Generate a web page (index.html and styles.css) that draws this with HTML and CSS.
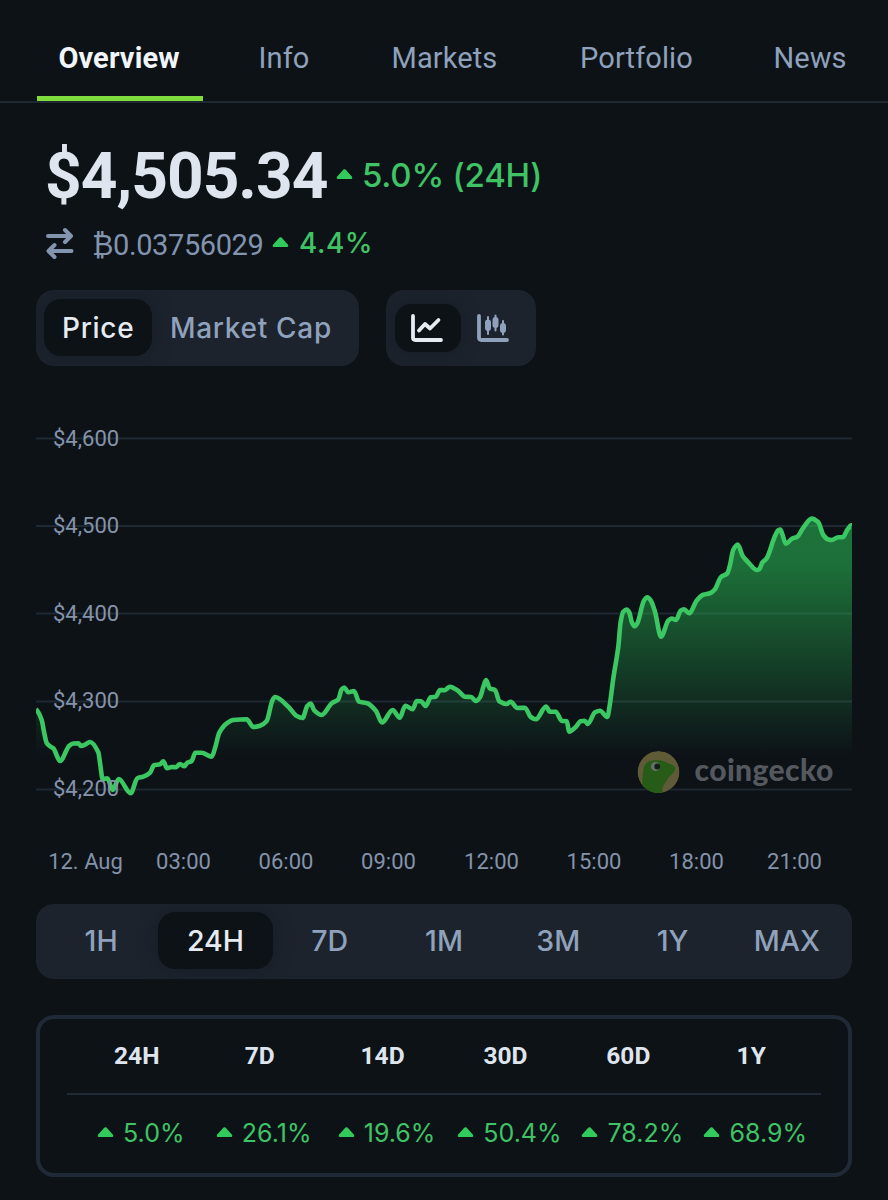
FILE: index.html
```html
<!DOCTYPE html>
<html lang="en">
<head>
    <meta charset="UTF-8">
    <meta name="viewport" content="width=device-width, initial-scale=1.0">
    <title>Price Overview</title>
    <link rel="stylesheet" href="styles.css">
</head>
<body>

<svg class="defs" width="0" height="0">
    <symbol id="caret" viewBox="0 0 16 10">
        <path d="M7 .6a1.500 1.500 0 0 1 2 0l6.300 6.900C16.200 8.600 15.700 10 14.400 10H1.600C.3 10-.2 8.600.7 7.500z" fill="currentColor"/>
    </symbol>
</svg>

<nav class="tabs">
    <a class="tab active">Overview</a>
    <a class="tab">Info</a>
    <a class="tab">Markets</a>
    <a class="tab">Portfolio</a>
    <a class="tab">News</a>
</nav>

<main class="container">
    <div class="price-row">
        <span class="price">$4,505.34</span>
        <svg class="caret"><use href="#caret"/></svg>
        <span class="change">5.0% (24H)</span>
    </div>
    <div class="btc-row">
        <svg class="swap" width="28" height="32" viewBox="0 0 28 32" fill="none" stroke="currentColor" stroke-width="4" stroke-linecap="round" stroke-linejoin="round">
            <path d="M2 9h23M19 3l6 6-6 6M25.500 24H3M8.500 18l-6 6 6 6"/>
        </svg>
        <span class="btc">₿0.03756029</span>
        <svg class="caret"><use href="#caret"/></svg>
        <span class="btc-change">4.4%</span>
    </div>

    <div class="toggles">
        <div class="toggle">
            <button class="toggle-btn price-btn active">Price</button>
            <button class="toggle-btn">Market Cap</button>
        </div>
        <div class="toggle icons">
            <button class="icon-btn active">
                <svg width="32" height="28" viewBox="0 0 32 28" fill="none" stroke="currentColor" stroke-width="3.800" stroke-linecap="round" stroke-linejoin="round">
                    <path d="M2 2v21.500q0 2.500 2.500 2.500H30M8 16.500l6-6.500 5 4.500 8.500-8.500"/>
                </svg>
            </button>
            <button class="icon-btn">
                <svg width="32" height="28" viewBox="0 0 32 28" fill="none" stroke="currentColor" stroke-width="3.800" stroke-linecap="round" stroke-linejoin="round">
                    <path d="M2 2v21.500q0 2.500 2.500 2.500H30"/>
                    <path d="M11 3v17M18.500 1.500v15M26 7v13.500" stroke-width="2"/>
                    <path d="M11 8.500v5.500M18.500 6v5M26 12v4" stroke-width="6"/>
                </svg>
            </button>
        </div>
    </div>

    <svg class="chart" width="816" height="468" viewBox="36 420 816 468">
        <defs>
            <linearGradient id="fill" gradientUnits="userSpaceOnUse" x1="0" y1="518" x2="0" y2="756">
                <stop offset="0" stop-color="#2ac256" stop-opacity=".55"/>
                <stop offset=".2" stop-color="#2ac256" stop-opacity=".53"/>
                <stop offset="1" stop-color="#2ac256" stop-opacity="0"/>
            </linearGradient>
            <clipPath id="logo-clip"><circle cx="658.500" cy="772" r="21"/></clipPath>
        </defs>
        <path class="grid" d="M36 438.500H852M36 526H852M36 613.500H852M36 701.500H852M36 789.500H852"/>
        <path id="area" fill="url(#fill)"/>
        <path id="line" class="line"/>
        <g class="axis">
            <text x="53" y="445.500">$4,600</text>
            <text x="53" y="532.500">$4,500</text>
            <text x="53" y="620.500">$4,400</text>
            <text x="53" y="708">$4,300</text>
            <text x="53" y="795.500">$4,200</text>
        </g>
        <g class="axis times">
            <text x="85.500" y="868.500">12. Aug</text>
            <text x="183.500" y="868.500">03:00</text>
            <text x="286" y="868.500">06:00</text>
            <text x="388.500" y="868.500">09:00</text>
            <text x="491.500" y="868.500">12:00</text>
            <text x="594" y="868.500">15:00</text>
            <text x="696.500" y="868.500">18:00</text>
            <text x="794.500" y="868.500">21:00</text>
        </g>
        <g clip-path="url(#logo-clip)">
            <circle cx="658.500" cy="772" r="21" fill="#5f5b37"/>
            <path d="M642 796C642 784 642.500 775 643.500 769c1-5 4-8 9-8.500 5-.6 9-.5 12 1 2 1.200 4 2 7 3 3.500 1.200 4.500 4 3 6.500-1.500 3-5 4.500-7 8.500-2 4-5 5-5 10l0 8z" fill="#265c17"/>
            <circle cx="655.500" cy="766.500" r="4.500" fill="#667068"/>
            <circle cx="657.300" cy="766.500" r="2.900" fill="#141d18"/>
        </g>
        <text class="brand" x="694.500" y="781">coingecko</text>
    </svg>

    <div class="ranges">
        <button class="range">1H</button>
        <button class="range active">24H</button>
        <button class="range">7D</button>
        <button class="range">1M</button>
        <button class="range">3M</button>
        <button class="range">1Y</button>
        <button class="range">MAX</button>
    </div>

    <div class="stats">
        <div class="stats-head">
            <span>24H</span><span>7D</span><span>14D</span><span>30D</span><span>60D</span><span>1Y</span>
        </div>
        <div class="stats-body">
            <span><svg class="caret"><use href="#caret"/></svg>5.0%</span>
            <span><svg class="caret"><use href="#caret"/></svg>26.1%</span>
            <span><svg class="caret"><use href="#caret"/></svg>19.6%</span>
            <span><svg class="caret"><use href="#caret"/></svg>50.4%</span>
            <span><svg class="caret"><use href="#caret"/></svg>78.2%</span>
            <span><svg class="caret"><use href="#caret"/></svg>68.9%</span>
        </div>
    </div>
</main>

<script>
    const points = [
        [36,709.3],[41.7,720],[44,731.7],[46.7,743],[50,746.3],[53.5,748.5],[60,761],[69.3,745.7],[73.3,743.5],[78.3,743.3],
        [81,746],[85,744.7],[90,742],[98.3,752.3],[100.3,765],[102.7,779.3],[107.3,778.3],[112.7,790],[118.7,779],[130.7,793.3],
        [137.3,778.3],[143.3,776.7],[150,772.7],[154,765.3],[160,764.3],[163.3,761.3],[167,768.3],[171.7,767],[175.7,767.3],[180,764],
        [184.3,766.3],[187.3,762.7],[191.7,761],[195.3,752.7],[201.7,752.7],[211.7,756.7],[215,748.3],[219.3,732.7],[226.7,723.3],[233.3,720],
        [246.7,719.3],[253.3,727],[260,725.7],[266.7,721],[272.3,700.7],[275,697],[288.3,706.7],[296.7,716],[302.5,718],[307.3,706],
        [310.7,703.5],[314.2,710.3],[321.7,715],[331.7,703.3],[338.3,699.3],[341.7,689.3],[344.3,687.5],[348.3,692.3],[354,691],[359,701.7],
        [367.3,703.3],[376,711],[382,722.5],[392.7,710],[399.7,717.7],[405.3,705.7],[412.7,709.3],[416.7,701],[421,701.3],[425.7,706],
        [430.7,697.3],[435.7,696.7],[440,690],[444.3,690.3],[450,686.7],[458.3,691],[465,696.7],[471,697],[476,701],[480,697.3],
        [483.3,687],[486,680],[490,688.7],[495,690],[499.3,701.3],[506.7,704],[510.7,701.7],[517.3,708],[525,707.7],[530.7,717],
        [536,719.3],[546,706.5],[550,711.7],[555.7,711.7],[561.7,720.7],[566.7,721.3],[569.3,731.7],[576,726.7],[580.5,721.3],[584.5,720.7],
        [587.7,724],[595,712.3],[600,710.7],[607.3,717],[610,703.3],[613.3,678.3],[618.3,646.7],[620.7,621.7],[623.3,611.7],[626.7,609.5],
        [629.3,612.5],[632,622.7],[634.7,626.3],[637.3,623.3],[644,600.5],[647.3,597.3],[650.7,600.3],[655,611.7],[661,636.7],[668.3,620.7],
        [671.7,618.5],[676,620],[680.7,610.7],[684,609.3],[689.3,613.3],[696.7,600.5],[703.3,594.7],[710,593.3],[715,589.3],[720.7,577.3],
        [727.3,573.3],[730,565],[733.3,549.8],[737.7,544.5],[742.7,556],[748.3,562.3],[756.7,570],[759.3,569.3],[762.3,562.7],[766.7,558.3],
        [775,536],[778.3,530.3],[780.3,529.6],[782.3,534],[785.7,543.7],[792.3,538.5],[797.3,536.7],[803.3,527.7],[811.7,518.6],[818.3,522.3],
        [823.3,535],[828.3,539.5],[831.7,540],[838.3,537.3],[842.7,537.3],[847.7,529.3],[852,525.5]
    ];

    // monotone spline: flat at peaks and valleys
    function tangent(i) {
        const a = points[i - 1], b = points[i], c = points[i + 1];
        if (!a || !c) return 0.8;
        const s1 = (b[1] - a[1]) / (b[0] - a[0]);
        const s2 = (c[1] - b[1]) / (c[0] - b[0]);
        return s1 * s2 <= 0 ? 0 : 2 * s1 * s2 / (s1 + s2);
    }

    let d = `M${points[0]}`;
    for (let i = 1; i < points.length; i++) {
        const [x0, y0] = points[i - 1], [x1, y1] = points[i];
        const dx = (x1 - x0) / 3;
        d += `C${x0 + dx},${y0 + dx * tangent(i - 1)} ${x1 - dx},${y1 - dx * tangent(i)} ${x1},${y1}`;
    }
    document.getElementById('line').setAttribute('d', d);
    document.getElementById('area').setAttribute('d', d + 'V789H36Z');
</script>

</body>
</html>
```
FILE: styles.css
```css
* {
    box-sizing: border-box;
}
body {
    margin: 0;
    height: 1200px;
    overflow: hidden;
    background-color: #0d1217;
    color: #dfe5ee;
    font-family: Roboto, sans-serif;
}
button {
    border: none;
    padding: 0;
    background: none;
    color: #8fa1bb;
    font: 500 28px/1 Inter, sans-serif;
}
svg {
    display: block;
    flex: none;
}
.defs {
    position: absolute;
}
.caret {
    width: 17px;
    height: 10px;
    margin-bottom: 2px;
    color: #32ca5b;
}
.tabs {
    display: grid;
    grid-template-columns: 166px 162px 159px 225px 122px;
    height: 103px;
    padding-left: 37px;
    border-bottom: 2px solid #202832;
}
.tab {
    padding-top: 41px;
    text-align: center;
    font-size: 29px;
    line-height: 34px;
    letter-spacing: 0.1px;
    color: #8fa1bb;
}
.tab.active {
    padding-right: 2px;
    border-bottom: 5px solid #80dc3c;
    font-weight: 700;
    color: #f1f5f9;
}
.container {
    padding: 0 36px;
}
.price-row {
    display: flex;
    align-items: center;
    height: 76px;
    margin-top: 34px;
    padding-left: 9px;
}
.price {
    width: 291px;
    padding-top: 2px;
    font-size: 64px;
    font-weight: 700;
    letter-spacing: -1px;
}
.change {
    margin-left: 9px;
    font: 500 33px/1 Inter, sans-serif;
    letter-spacing: -0.2px;
    color: #3fc365;
}
.btc-row {
    display: flex;
    align-items: center;
    height: 36px;
    margin-top: 12px;
    padding-left: 10px;
    color: #8294ae;
}
.btc {
    width: 180px;
    margin-left: 18px;
    padding-top: 3px;
    font-size: 29px;
    letter-spacing: -0.4px;
}
.btc-change {
    margin-left: 10px;
    font: 500 28px/1 Inter, sans-serif;
    letter-spacing: 0.5px;
    color: #3fc365;
}
.toggles {
    display: flex;
    gap: 27px;
    margin-top: 29px;
}
.toggle {
    display: flex;
    align-items: center;
    width: 323px;
    height: 76px;
    padding: 8px 8px 10px;
    border-radius: 18px;
    background-color: #1c232c;
    overflow: hidden;
}
.toggle-btn {
    height: 57px;
    padding: 2px 18px 0;
    border-radius: 17px;
    letter-spacing: 0.7px;
}
.price-btn {
    width: 108px;
}
.icons {
    width: 150px;
    padding: 8px 9px;
}
.icon-btn {
    display: flex;
    align-items: center;
    justify-content: center;
    width: 66px;
    height: 48px;
    padding-right: 2px;
    border-radius: 16px;
}
.toggle .active,
.range.active {
    background-color: #0d1217;
    color: #e6ebf2;
    box-shadow: 0 0 18px rgba(20, 24, 38, 0.5);
}
.chart {
    margin-top: 54px;
}
.grid {
    stroke: #1f2833;
    stroke-width: 2;
}
.line {
    fill: none;
    stroke: #3bc862;
    stroke-width: 4.6;
    stroke-linejoin: round;
}
.axis {
    font-size: 22px;
    fill: #8593aa;
}
.times {
    text-anchor: middle;
}
.brand {
    font: 900 30px Lato, sans-serif;
    letter-spacing: 0.4px;
    fill: #54595f;
}
.ranges {
    display: grid;
    grid-template-columns: repeat(7, 1fr);
    height: 75px;
    margin-top: 16px;
    padding: 8px 8px 10px;
    border-radius: 18px;
    background-color: #1c232c;
    overflow: hidden;
}
.range {
    padding-top: 2px;
    border-radius: 17px;
    font-size: 28.5px;
}
.stats {
    height: 162px;
    margin-top: 36px;
    padding: 0 27px;
    border: 4px solid #202a37;
    border-radius: 18px;
}
.stats-head,
.stats-body {
    display: grid;
    grid-template-columns: repeat(6, 122.9px);
    align-items: center;
    justify-content: center;
    text-align: center;
}
.stats-head {
    height: 76px;
    padding-bottom: 2px;
    border-bottom: 2px solid #202a37;
    font-size: 24.5px;
    font-weight: 700;
}
.stats-body {
    height: 76px;
    padding-left: 8px;
    font: 400 25px/1 Inter, sans-serif;
    color: #3fc365;
}
.stats-body span {
    display: flex;
    align-items: center;
    justify-content: center;
    gap: 9px;
}
```
